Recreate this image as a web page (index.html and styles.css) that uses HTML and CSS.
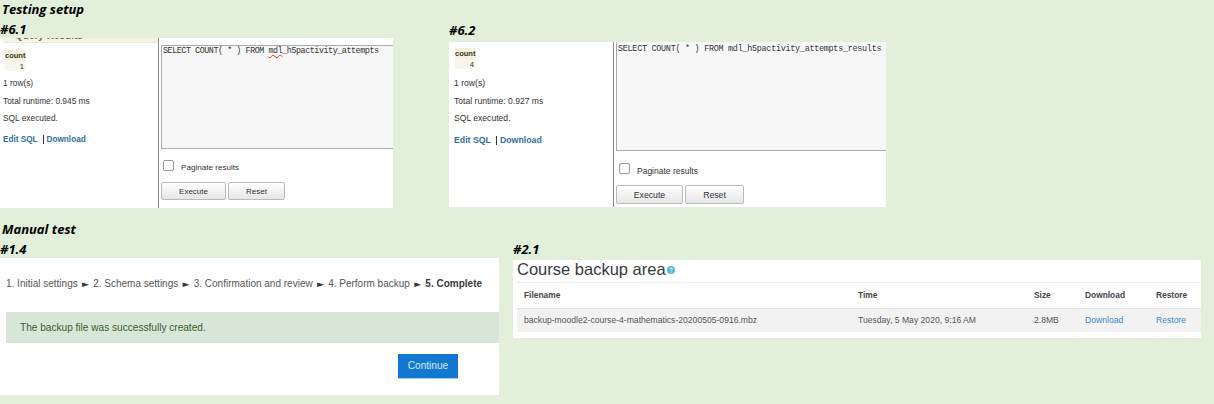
FILE: index.html
```html
<!DOCTYPE html>
<html lang="en">
<head>
<meta charset="utf-8">
<title>Testing setup</title>
<link rel="stylesheet" href="styles.css">
</head>
<body>
<h1 class="heading heading-first">Testing setup</h1>
<div class="row row-sql">
  <section class="col col-61">
    <h2 class="label label-61">#6.1</h2>
    <div class="sql sql-61">
      <div class="sql-side">
        <div class="strip"><span class="strip-text">Query Results</span></div>
        <table class="count"><tr><th>count</th></tr><tr><td>1</td></tr></table>
        <p class="line line-rows">1 row(s)</p>
        <p class="line">Total runtime: 0.945 ms</p>
        <p class="line">SQL executed.</p>
        <p class="links"><a>Edit SQL</a><span class="sep"></span><a>Download</a></p>
      </div>
      <div class="sql-main">
        <div class="box">SELECT COUNT( * ) FROM <span class="typo">mdl</span>_h5pactivity_attempts</div>
        <div class="check"><span class="tick"></span><span class="check-text">Paginate results</span></div>
        <div class="btns"><span class="btn btn-exec">Execute</span><span class="btn btn-reset">Reset</span></div>
      </div>
    </div>
  </section>
  <section class="col col-62">
    <h2 class="label label-62">#6.2</h2>
    <div class="sql sql-62">
      <div class="sql-side">
        <table class="count"><tr><th>count</th></tr><tr><td>4</td></tr></table>
        <p class="line line-rows">1 row(s)</p>
        <p class="line">Total runtime: 0.927 ms</p>
        <p class="line">SQL executed.</p>
        <p class="links"><a>Edit SQL</a><span class="sep"></span><a>Download</a></p>
      </div>
      <div class="sql-main">
        <div class="box">SELECT COUNT( * ) FROM mdl_h5pactivity_attempts_results</div>
        <div class="check"><span class="tick"></span><span class="check-text">Paginate results</span></div>
        <div class="btns"><span class="btn btn-exec">Execute</span><span class="btn btn-reset">Reset</span></div>
      </div>
    </div>
  </section>
</div>
<h1 class="heading heading-second">Manual test</h1>
<div class="row row-manual">
  <section class="col col-14">
    <h2 class="label label-14">#1.4</h2>
    <div class="backup">
      <p class="steps">1. Initial settings <i>►</i> 2. Schema settings <i>►</i> 3. Confirmation and review <i>►</i> 4. Perform backup <i>►</i> <b>5. Complete</b></p>
      <div class="notice">The backup file was successfully created.</div>
      <div class="actions"><span class="continue">Continue</span></div>
    </div>
  </section>
  <section class="col col-21">
    <h2 class="label label-21">#2.1</h2>
    <div class="area">
      <h3 class="area-title">Course backup area<svg class="help" width="8" height="8" viewBox="0 0 8 8"><circle cx="4" cy="4" r="4" fill="#5bb5d9"/><path d="M2.8 3.1c.1-.8.6-1.1 1.3-1.1s1.2.4 1.2 1c0 .9-1.2.9-1.2 1.7" fill="none" stroke="#fff" stroke-width=".9"/><circle cx="4.1" cy="6" r=".55" fill="#fff"/></svg></h3>
      <table class="files">
        <tr><th class="c-name">Filename</th><th class="c-time">Time</th><th class="c-size">Size</th><th class="c-dl">Download</th><th>Restore</th></tr>
        <tr class="shade"><td>backup-moodle2-course-4-mathematics-20200505-0916.mbz</td><td>Tuesday, 5 May 2020, 9:16 AM</td><td>2.8MB</td><td><a>Download</a></td><td><a>Restore</a></td></tr>
      </table>
    </div>
  </section>
</div>
</body>
</html>
```
FILE: styles.css
```css
* { box-sizing: border-box; }
html, body { margin: 0; padding: 0; }
body {
  width: 1214px;
  height: 404px;
  overflow: hidden;
  background: #e2efda;
  font-family: "Liberation Sans", Arial, sans-serif;
  color: #373a3c;
}
.heading, .label {
  margin: 0;
  font-family: "Open Sans", sans-serif;
  font-style: italic;
  font-weight: 700;
  color: #000;
}
.heading { font-size: 13px; line-height: 18px; padding-left: 2px; }
.heading-second { margin-top: 12px; }
.label { font-size: 13px; line-height: 18px; }
.row { display: flex; align-items: flex-start; }
.col { flex: none; }
.label-61 { height: 20px; padding-top: 2px; overflow: hidden; }
.label-62 { height: 24px; padding-top: 3px; }
.label-14 { height: 20px; padding-top: 2px; overflow: hidden; }
.label-21 { height: 22px; padding-top: 2px; }
.col-61 { width: 449px; }
.col-62 { width: 437px; }
.col-14 { width: 513px; }
.col-21 { width: 688px; }

.sql { display: flex; background: #fff; overflow: hidden; }
.sql-61 { width: 393px; height: 170px; font-size: 8.35px; }
.sql-62 { width: 437px; height: 165px; font-size: 8.6px; }
.sql-side { flex: none; border-right: 1px solid #8a8a8a; }
.sql-61 .sql-side { width: 159px; }
.sql-62 .sql-side { width: 165px; padding-top: 6px; }
.strip {
  height: 5px;
  margin-left: 3px;
  background: #f5f3e6;
  border-bottom: 1px solid #ecebd8;
  overflow: hidden;
  position: relative;
}
.strip-text {
  position: absolute;
  left: 12px;
  top: -2px;
  font-size: 10px;
  line-height: 0;
  color: #6b6b60;
  font-weight: 700;
  white-space: nowrap;
}
.count { border-collapse: collapse; margin: 7px 0 0 5px; font-size: 7.5px; }
.sql-62 .count { margin-top: 0; margin-left: 6px; }
.count th { background: #f5f2d8; padding: 2px 0; height: 10px; line-height: 7px; color: #333; width: 21px; text-align: left; }
.count td { background: #f6f6ee; padding: 1px 2px 1px 0; height: 10px; line-height: 7px; text-align: right; color: #333; }
.line { margin: 0 0 0 3px; font-size: 1em; line-height: 17.5px; color: #333; white-space: nowrap; }
.sql-62 .line { margin-left: 5px; }
.line-rows { margin-top: 4px; }
.sql-62 .line-rows { margin-top: 6px; }
.links { margin: 3px 0 0 3px; font-size: 1em; line-height: 17px; font-weight: 700; color: #2f6fa3; display: flex; align-items: center; }
.sql-61 .links { font-size: 8.2px; }
.sql-62 .links { margin-left: 5px; margin-top: 4px; font-size: 8.75px; }
.sep { width: 1px; height: 9px; background: #333; margin: 0 3px 0 5px; }
.sql-main { flex: 1; padding-left: 2px; min-width: 0; }
.sql-61 .sql-main { padding-top: 7px; }
.box {
  width: 240px;
  background: #f7f7f7;
  border: 1px solid #aaa;
  font-family: "Liberation Mono", monospace;
  font-size: 8.4px;
  letter-spacing: -0.44px;
  line-height: 10px;
  padding: 0 1px;
  color: #333;
  white-space: nowrap;
}
.sql-61 .box { height: 104px; }
.sql-62 .box { width: 280px; height: 109px; letter-spacing: -0.24px; padding-top: 1px; border-top-color: #f7f7f7; }
.typo { text-decoration: underline wavy #d33; text-decoration-thickness: 0.6px; }
.check { display: flex; align-items: flex-start; gap: 7px; margin: 11px 0 0 2px; font-size: 8.1px; line-height: 12px; color: #333; }
.sql-62 .check { margin: 12px 0 0 3px; font-size: 8.5px; }
.check-text { padding-top: 2px; }
.tick { width: 11px; height: 11px; border: 1px solid #999; border-radius: 2px; background: #fff; }
.btns { display: flex; gap: 2px; margin-top: 8px; }
.btn {
  height: 18px;
  line-height: 17px;
  text-align: center;
  font-size: 8px;
  border: 1px solid #bbb;
  border-radius: 2px;
  background: linear-gradient(#fff, #e6e6e6);
  color: #333;
}
.sql-62 .btn { height: 19px; line-height: 18px; font-size: 8.7px; }
.btn-exec { width: 65px; }
.btn-reset { width: 57px; }
.sql-62 .btn-exec { width: 67px; }
.sql-62 .btn-reset { width: 59px; }

.backup { width: 499px; height: 137px; background: #fff; overflow: hidden; }
.steps { margin: 0; padding: 18px 0 0 6px; font-size: 10px; line-height: 16px; color: #555; white-space: nowrap; }
.steps i { font-style: normal; font-family: "DejaVu Sans", sans-serif; font-size: 9px; line-height: 0; color: #373a3c; margin: 0 1.5px; }
.steps b { color: #373a3c; }
.notice {
  margin: 20px 0 0 6px;
  height: 31px;
  line-height: 31px;
  padding-left: 14px;
  background: #d8e6d8;
  color: #3c5c30;
  font-size: 10.1px;
}
.actions { display: flex; justify-content: flex-end; padding: 11px 41px 0 0; }
.continue {
  width: 60px;
  height: 25px;
  line-height: 23px;
  text-align: center;
  background: #1177d1;
  border-bottom: 1px solid #9fd0f5;
  color: #dcecf9;
  font-size: 10.1px;
}

.area { width: 688px; height: 78px; background: #fff; padding: 0 0 0 4px; }
.area-title { margin: 0; font-weight: 400; font-size: 16.5px; line-height: 18px; color: #373a3c; height: 22px; display: flex; align-items: flex-start; }
.help { margin: 6px 0 0 1px; }
.files { border-collapse: collapse; width: 684px; table-layout: fixed; font-size: 8.6px; color: #555; }
.files th { text-align: left; font-weight: 700; font-size: 8.4px; height: 26px; padding: 0 0 2px 7px; border-top: 1px solid #eee; border-bottom: 1px solid #e4e4e4; color: #444; }
.files td { height: 23px; padding: 0 0 1px 7px; white-space: nowrap; }
.shade td { background: #f2f2f2; }
.files a { color: #3b8ad0; }
.c-name { width: 334px; }
.c-time { width: 176px; }
.c-size { width: 51px; }
.c-dl { width: 71px; }
```
